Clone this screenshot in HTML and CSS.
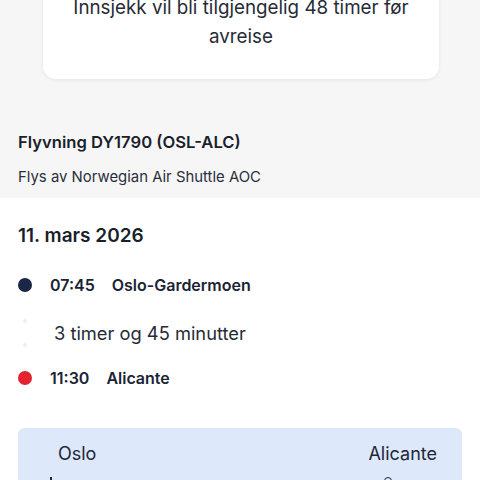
FILE: index.html
```html
<!DOCTYPE html>
<html lang="no">
<head>
<meta charset="utf-8">
<link rel="stylesheet" href="styles.css">
</head>
<body>
<div class="page">
  <section class="top">
    <div class="card">
      <p class="card-text">Innsjekk vil bli tilgjengelig 48 timer før avreise</p>
    </div>
    <h2 class="flight-title">Flyvning DY1790 (OSL-ALC)</h2>
    <p class="operator">Flys av Norwegian Air Shuttle AOC</p>
  </section>
  <section class="details">
    <h3 class="date">11. mars 2026</h3>
    <div class="timeline">
      <div class="row">
        <span class="dot dot-navy"></span>
        <span class="time">07:45</span>
        <span class="place">Oslo-Gardermoen</span>
      </div>
      <div class="row row-duration">
        <span class="dots"><i></i><i></i></span>
        <span class="duration">3 timer og 45 minutter</span>
      </div>
      <div class="row">
        <span class="dot dot-red"></span>
        <span class="time">11:30</span>
        <span class="place">Alicante</span>
      </div>
    </div>
    <div class="route">
      <div class="route-cities">
        <span>Oslo</span>
        <span>Alicante</span>
      </div>
      <div class="route-marks">
        <span class="tick"></span>
        <span class="ring"></span>
      </div>
    </div>
  </section>
</div>
</body>
</html>
```
FILE: styles.css
```css
* { box-sizing: border-box; }
html, body { margin: 0; padding: 0; }
body {
  font-family: Inter, "Noto Sans", sans-serif;
  color: #1b2334;
  background: #ffffff;
  width: 480px;
  height: 480px;
  overflow: hidden;
}
.page { display: flex; flex-direction: column; }
.top {
  background: #f6f6f7;
  padding: 0 18px 10px;
  display: flex;
  flex-direction: column;
}
.card {
  margin: -35px 23px 0 25px;
  background: #ffffff;
  border-radius: 13px;
  box-shadow: 0 1px 4px rgba(0,0,0,0.07);
  padding: 28px 20px;
}
.card-text {
  margin: 0;
  text-align: center;
  font-size: 18.8px;
  line-height: 29px;
  color: #262b36;
}
.flight-title {
  margin: 51px 0 0;
  font-size: 16.6px;
  line-height: 24px;
  font-weight: 600;
  color: #1a1f2b;
}
.operator {
  margin: 12px 0 0;
  font-size: 14.9px;
  line-height: 22px;
  color: #2a2f3a;
}
.details {
  padding: 25px 18px 0;
  display: flex;
  flex-direction: column;
}
.date {
  margin: 0;
  font-size: 19px;
  line-height: 26px;
  font-weight: 600;
  color: #1a1f2b;
}
.timeline {
  margin-top: 24px;
  display: flex;
  flex-direction: column;
}
.row {
  display: flex;
  align-items: center;
  height: 24px;
  font-size: 16px;
  font-weight: 600;
  color: #1b2334;
}
.dot {
  width: 14px;
  height: 14px;
  border-radius: 50%;
  margin-right: 18px;
  flex: none;
}
.dot-navy { background: #1a2846; }
.dot-red { background: #e3232f; }
.time { margin-right: 17px; }
.row-duration {
  margin: 24px 0 21px;
  font-weight: 400;
  font-size: 18.3px;
}
.dots {
  width: 14px;
  margin-right: 22px;
  display: flex;
  flex-direction: column;
  align-items: center;
  gap: 20px;
  flex: none;
}
.dots i {
  display: block;
  width: 4px;
  height: 4px;
  border-radius: 50%;
  background: #eeeef0;
}
.duration { color: #262b36; }
.route {
  margin-top: 38px;
  background: #dee8fb;
  border-radius: 6px;
  padding: 14px 25px 0 40px;
  height: 80px;
}
.route-cities {
  display: flex;
  justify-content: space-between;
  font-size: 18px;
  line-height: 24px;
  color: #1f2638;
}
.route-marks {
  display: flex;
  justify-content: space-between;
  padding: 11px 45px 0 0;
  margin-left: -8px;
}
.tick {
  width: 2px;
  height: 12px;
  background: #1f2638;
}
.ring {
  width: 8px;
  height: 8px;
  border: 1.5px solid #1f2638;
  border-radius: 50%;
}
```
